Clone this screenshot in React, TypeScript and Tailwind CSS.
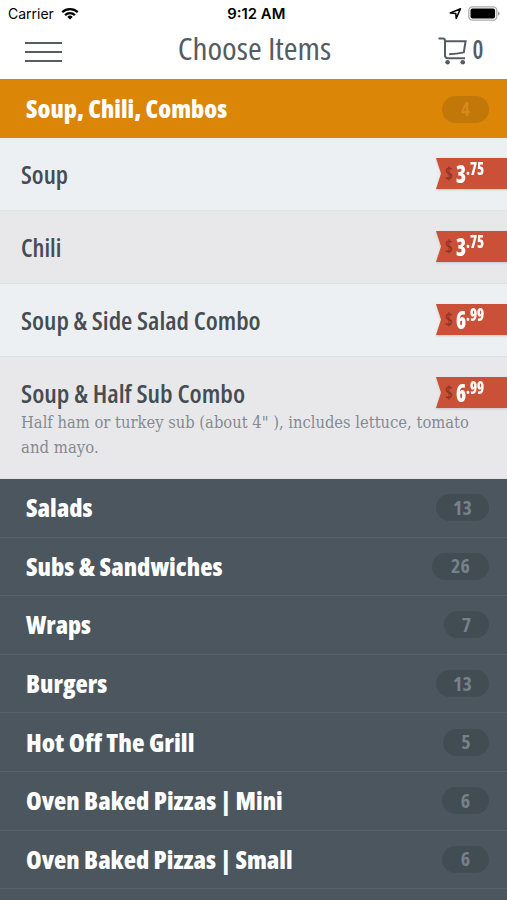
type Item = {
  name: string
  dollars: string
  cents: string
  shape: string
  desc?: { text: string; shape: string }[]
}

const items: Item[] = [
  { name: 'Soup', dollars: '3', cents: '75', shape: 'scale-x-[1.02]' },
  { name: 'Chili', dollars: '3', cents: '75', shape: 'scale-x-100' },
  { name: 'Soup & Side Salad Combo', dollars: '6', cents: '99', shape: 'scale-x-[1.037]' },
  {
    name: 'Soup & Half Sub Combo',
    dollars: '6',
    cents: '99',
    shape: 'scale-x-[1.049]',
    desc: [
      { text: 'Half ham or turkey sub (about 4" ), includes lettuce, tomato', shape: 'scale-x-[0.964]' },
      { text: 'and mayo.', shape: 'scale-x-[0.975]' },
    ],
  },
]

const categories = [
  { name: 'Salads', count: 13, shape: 'scale-x-[1.015]', pill: 'w-[53px]' },
  { name: 'Subs & Sandwiches', count: 26, shape: 'scale-x-[1.016]', pill: 'w-[57px]' },
  { name: 'Wraps', count: 7, shape: 'scale-x-100', pill: 'w-[45px]' },
  { name: 'Burgers', count: 13, shape: 'scale-x-[1.01]', pill: 'w-[53px]' },
  { name: 'Hot Off The Grill', count: 5, shape: 'scale-x-[1.035]', pill: 'w-[46px]' },
  { name: 'Oven Baked Pizzas | Mini', count: 6, shape: 'scale-x-[1.011]', pill: 'w-[47px]' },
  { name: 'Oven Baked Pizzas | Small', count: 6, shape: 'scale-x-[1.01]', pill: 'w-[47px]' },
]

export default function App() {
  return (
    <div className="flex h-[900px] w-[507px] flex-col overflow-hidden bg-[#4c565e] font-['Open_Sans',sans-serif] [font-stretch:75%]">
      <StatusBar />
      <NavBar />

      <div className="flex h-[59px] shrink-0 items-center justify-between border-t border-[#b9894a] bg-[#dc8607] pr-[18px] pl-[26px]">
        <span className="origin-left scale-x-[1.006] pb-px text-[25px] leading-none font-extrabold whitespace-nowrap text-white">
          Soup, Chili, Combos
        </span>
        <span className="flex h-[27px] w-[47px] items-center justify-center rounded-full bg-[#c17809] text-[19px] font-bold text-[#d58a1c]">
          4
        </span>
      </div>

      {items.map((item, i) => (
        <ItemRow key={item.name} item={item} odd={i % 2 === 1} />
      ))}

      {categories.map((c) => (
        <div
          key={c.name}
          className="flex h-[58.6px] shrink-0 items-center justify-between border-b border-[#576269] pr-[18px] pl-[26px]"
        >
          <span className={`origin-left text-[25px] leading-none font-extrabold whitespace-nowrap text-white ${c.shape}`}>
            {c.name}
          </span>
          <span className={`flex h-[27px] items-center justify-center rounded-full bg-[#424c53] text-[20px] font-bold text-[#75818b] ${c.pill}`}>
            {c.count}
          </span>
        </div>
      ))}
    </div>
  )
}

function StatusBar() {
  return (
    <div className="grid h-[27px] shrink-0 grid-cols-3 items-center bg-white pr-[7px] pl-2 font-['Inter',sans-serif] text-[14px] text-black [font-stretch:100%]">
      <div className="flex items-center gap-[7px]">
        <span>Carrier</span>
        <svg viewBox="0 0 18 13" className="h-[13px] w-[18px]" fill="none" stroke="currentColor" strokeWidth="2.3" aria-hidden="true">
          <path d="M1.2 5.2a11.2 11.2 0 0 1 15.6 0" />
          <path d="M4.1 8.1a7 7 0 0 1 9.8 0" />
          <path d="M9 12.6 6.3 9.9a3.9 3.9 0 0 1 5.4 0z" fill="currentColor" stroke="none" />
        </svg>
      </div>
      <div className="pl-[5px] text-center font-semibold whitespace-nowrap">
        <span className="inline-block scale-x-[1.06]">9:12 AM</span>
      </div>
      <div className="flex items-center justify-end gap-[6px]">
        <svg viewBox="0 0 13 13" className="size-[13px]" fill="none" stroke="currentColor" strokeWidth="1.5" aria-hidden="true">
          <path d="M1.3 6 11.5 1.8 7.2 11.4 6.8 6.5z" strokeLinejoin="round" />
        </svg>
        <svg viewBox="0 0 32 15" className="h-[15px] w-8" aria-hidden="true">
          <rect x=".8" y=".8" width="28" height="13.4" rx="3.6" fill="#fff" stroke="#aaa" strokeWidth="1.3" />
          <rect x="2.5" y="2.5" width="24.6" height="10" rx="2" />
          <path d="M30 5.3q1.6.7 1.6 2.2T30 9.7z" fill="#999" />
        </svg>
      </div>
    </div>
  )
}

function NavBar() {
  return (
    <div className="grid h-[52px] shrink-0 grid-cols-[1fr_auto_1fr] items-start bg-white pr-[24px] pl-[25px] text-[#575c61]">
      <div className="mt-[15px] flex w-[37px] flex-col gap-[6.5px]">
        <div className="h-[2.3px] bg-current" />
        <div className="h-[2.3px] bg-current" />
        <div className="h-[2.3px] bg-current" />
      </div>
      <h1 className="mt-[6px] scale-x-[1.075] text-[31px] leading-none font-normal whitespace-nowrap">Choose Items</h1>
      <div className="flex items-start justify-end gap-[6px] pt-[8px]">
        <svg viewBox="0 0 29 28" className="mt-[2px] h-[28px] w-[29px]" fill="none" stroke="currentColor" strokeWidth="2" aria-hidden="true">
          <path d="M.5 1.5h4.3q2.2 0 2.2 2.2v14.5q0 3 3 3h17" />
          <path d="M7 4.2h20.6l-1.8 11.2q-7 1.7-14.6 1.8" />
          <circle cx="9.6" cy="25.2" r="2.3" fill="currentColor" stroke="none" />
          <circle cx="24.8" cy="25.2" r="2.3" fill="currentColor" stroke="none" />
        </svg>
        <span className="-mr-px -ml-px scale-x-90 text-[27px] leading-none font-semibold">0</span>
      </div>
    </div>
  )
}

function ItemRow({ item, odd }: { item: Item; odd: boolean }) {
  return (
    <div
      className={`flex shrink-0 items-start justify-between border-b pl-[21px] ${odd ? 'border-[#dfe0e2] bg-[#e8e8ea]' : 'border-[#e0e2e4] bg-[#edf0f2]'} ${item.desc ? 'h-[122px]' : 'h-[73px]'}`}
    >
      <div className="w-0 pt-[24px]">
        <div className={`mb-[4px] w-max origin-left text-[25px] leading-[25px] font-semibold whitespace-nowrap text-[#454d53] [font-stretch:79%] ${item.shape}`}>
          {item.name}
        </div>
        {item.desc?.map((line) => (
          <div
            key={line.text}
            className={`w-max origin-left font-['DejaVu_Serif','DejaVu_Serif_Condensed',serif] text-[17px] leading-[25px] whitespace-nowrap text-[#858a91] ${line.shape}`}
          >
            {line.text}
          </div>
        ))}
      </div>
      <PriceTag dollars={item.dollars} cents={item.cents} />
    </div>
  )
}

function PriceTag({ dollars, cents }: { dollars: string; cents: string }) {
  return (
    <div className="mt-5 drop-shadow-[0_1px_1px_rgba(0,0,0,0.15)]">
      <div className="flex h-[31px] w-[71px] items-start bg-[#cb5038] pl-[9px] font-extrabold text-white [clip-path:polygon(0_0,100%_0,100%_100%,0_100%,5px_50%)]">
        <span className="mt-[7px] text-[17px] leading-none font-semibold text-[#8f3424]">$</span>
        <span className="mt-[3px] ml-[3px] w-[10px] origin-left scale-x-[0.82] text-[25px] leading-none">{dollars}</span>
        <span className="mt-[2px] origin-left scale-x-[0.84] text-[17px] leading-none">.{cents}</span>
      </div>
    </div>
  )
}
